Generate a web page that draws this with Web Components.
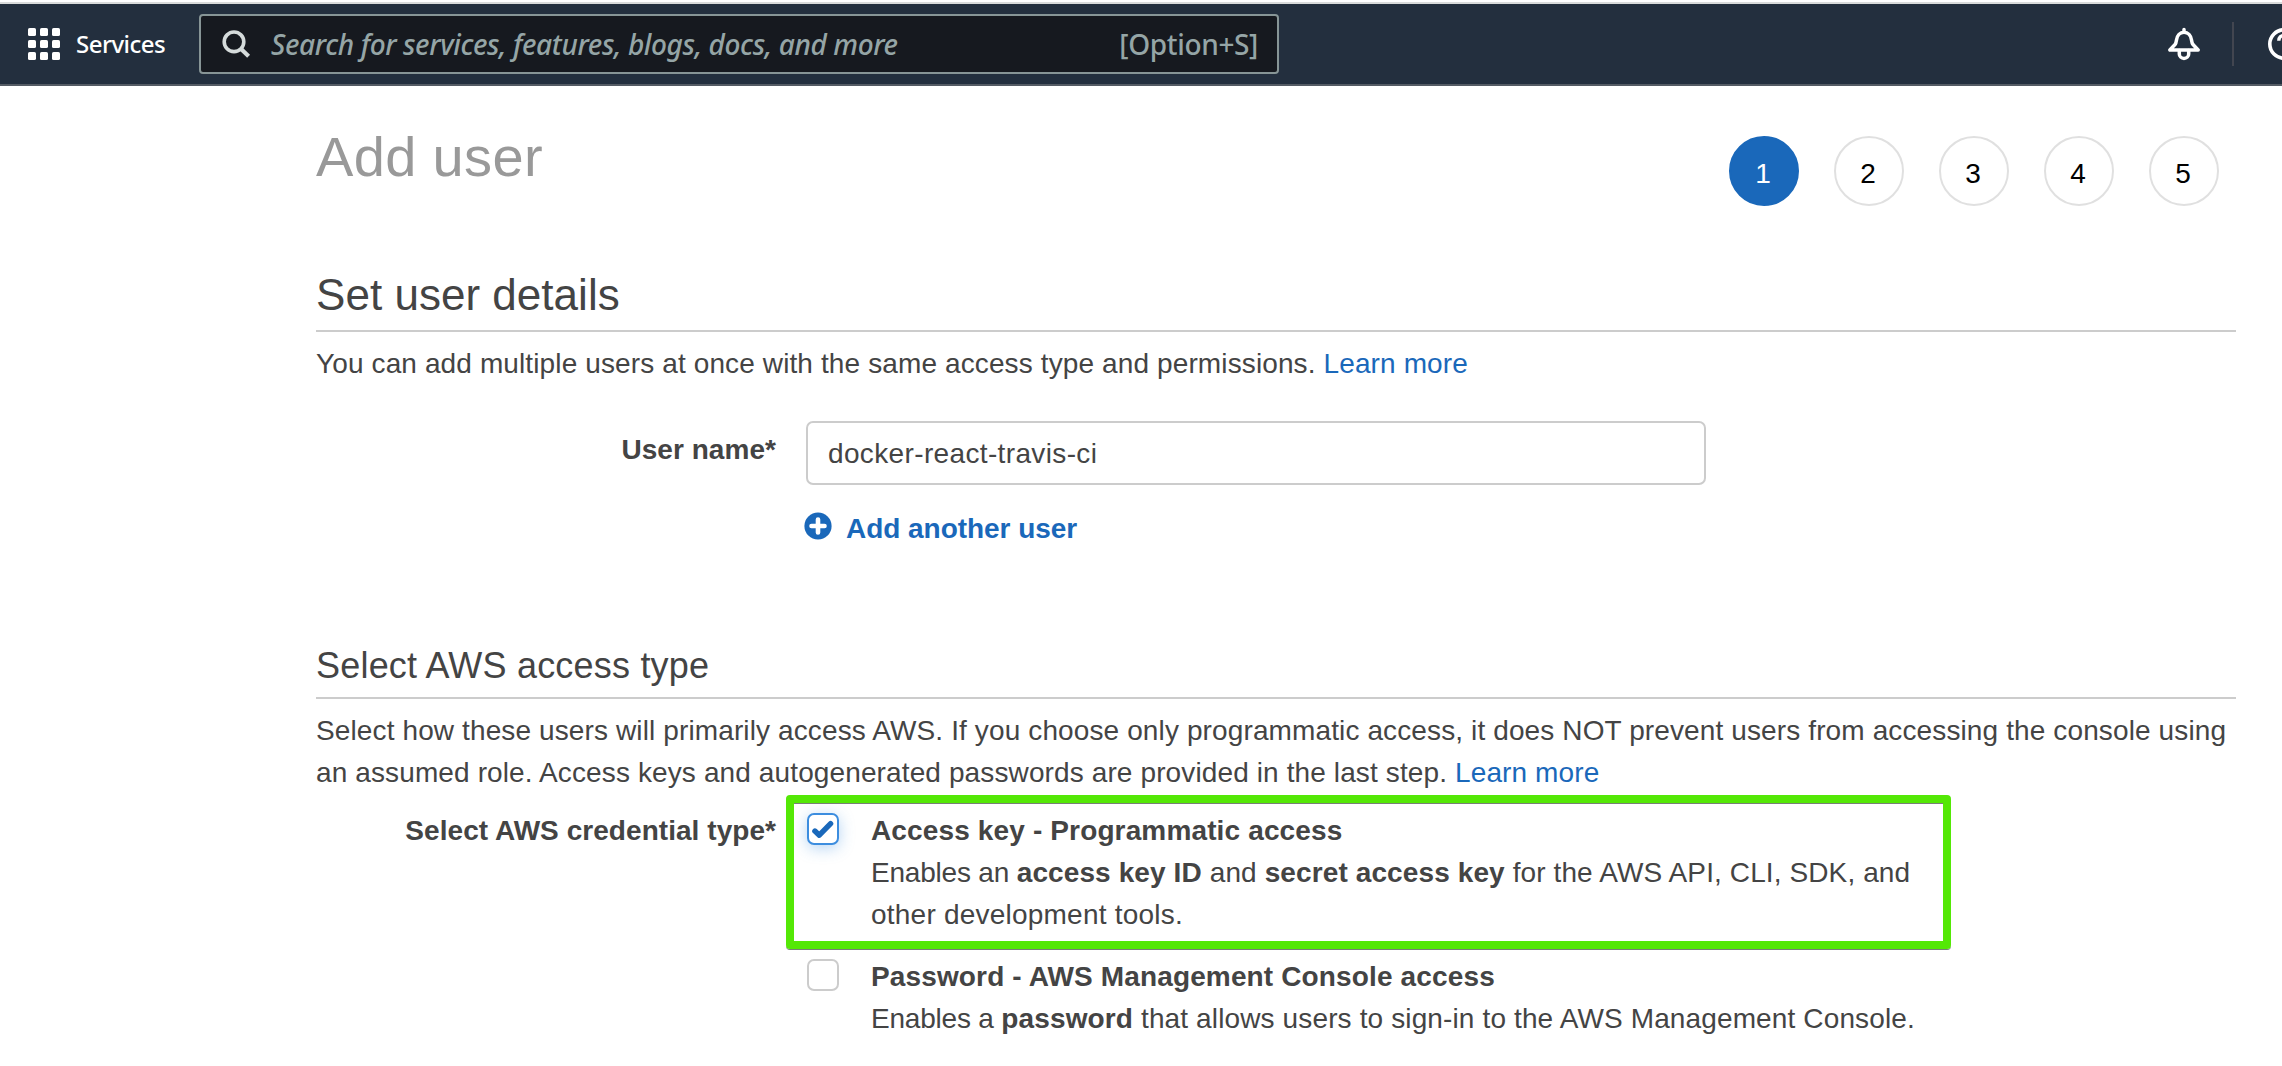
<!DOCTYPE html>
<html lang="en">
<head>
<meta charset="utf-8">
<title>Add user</title>
<style>
  html, body { margin: 0; height: 100%; overflow: hidden; background: #fff; }
  body { font-family: "Liberation Sans", Arial, sans-serif; font-size: 28px; line-height: 42px; letter-spacing: .12px; color: #444; }
</style>
</head>
<body>
<add-user-page></add-user-page>
<script>
const define = (name, html) => {
  const tpl = document.createElement('template');
  tpl.innerHTML = html;
  customElements.define(name, class extends HTMLElement {
    constructor() {
      super();
      this.attachShadow({ mode: 'open' }).append(tpl.content.cloneNode(true));
    }
  });
};

define('search-box', `
<style>
  :host { display: flex; align-items: center; box-sizing: border-box; width: 1080px; height: 60px; padding: 0 19px 0 20px;
    border: 2px solid #879596; border-radius: 4px; background: #16191f; color: #95a5a6; line-height: 40px; font-weight: 500; }
  svg { flex: none; width: 30px; height: 30px; margin-right: 20px; }
  .hint { flex: 1; font-style: italic; letter-spacing: -.38px; }
  .key { letter-spacing: -.35px; }
</style>
<svg viewBox="0 0 30 30" fill="none" stroke="#d5dbdb"><circle cx="13" cy="12.8" r="9.8" stroke-width="3.6"/><path d="M19.6 19.6 27.6 27.2" stroke-width="4.2"/></svg>
<span class="hint">Search for services, features, blogs, docs, and more</span>
<span class="key">[Option+S]</span>`);

define('top-nav', `
<style>
  :host { display: flex; align-items: flex-start; box-sizing: border-box; height: 84px; margin-top: 2px; background: #232f3e;
    border-top: 2px solid #d9dbdb; border-bottom: 2px solid #545b64; font-family: "Noto Sans", sans-serif; overflow: hidden; }
  .grid { flex: none; width: 32px; height: 32px; margin: 24px 16px 0 28px; }
  .services { width: 123px; margin-top: 20px; line-height: 40px; font-size: 24px; font-weight: 500; letter-spacing: -.55px; color: #fff; }
  search-box { flex: none; margin-top: 10px; }
  .bell { flex: none; width: 34px; height: 34px; margin: 23px 31px 0 auto; }
  .rule { flex: none; width: 2px; height: 44px; margin: 18px 33px 0 0; background: #424650; }
  .help { flex: none; width: 34px; height: 34px; margin: 23px -19px 0 0; }
</style>
<svg class="grid" viewBox="0 0 32 32" fill="#fff">
  <rect width="8" height="8" rx="1.6"/><rect x="12" width="8" height="8" rx="1.6"/><rect x="24" width="8" height="8" rx="1.6"/>
  <rect y="12" width="8" height="8" rx="1.6"/><rect x="12" y="12" width="8" height="8" rx="1.6"/><rect x="24" y="12" width="8" height="8" rx="1.6"/>
  <rect y="24" width="8" height="8" rx="1.6"/><rect x="12" y="24" width="8" height="8" rx="1.6"/><rect x="24" y="24" width="8" height="8" rx="1.6"/>
</svg>
<span class="services">Services</span>
<search-box></search-box>
<svg class="bell" viewBox="0 0 34 34" fill="none" stroke="#fff" stroke-width="3.5" stroke-linejoin="round" stroke-linecap="round">
  <path d="M17 2.6V5M2.8 22.9h28.4L26 17.6c-1-1.2-1.2-2.4-1.5-4.6C23.9 8.4 21 5.2 17 5.2S10.1 8.4 9.5 13c-.3 2.2-.5 3.4-1.5 4.6z"/><path d="M12.3 23.5v3.4a4.7 4.5 0 0 0 9.4 0v-3.4"/>
</svg>
<span class="rule"></span>
<svg class="help" viewBox="0 0 34 34" fill="none" stroke="#fff">
  <circle cx="17" cy="17" r="14.2" stroke-width="3.6"/><path d="M11.8 13.8c0-3.4 2.2-5.4 5.2-5.4s5.2 2 5.2 4.8c0 3-5.2 3.4-5.2 6.8M17 22.6v3.2" stroke-width="3.4"/>
</svg>`);

define('wizard-step', `
<style>
  :host { display: block; box-sizing: border-box; width: 70px; height: 70px; border: 2px solid #e0e0e0; border-radius: 50%;
    text-align: center; line-height: 71px; letter-spacing: 0; color: #000; }
  :host([active]) { background: #1a68ba; border-color: #1a68ba; color: #fff; }
  slot { display: block; margin-left: -2px; }
</style>
<slot></slot>`);

define('section-heading', `
<style>
  :host { display: block; border-bottom: 2px solid #ccc; box-sizing: border-box; }
  :host([level="2"]) { height: 67px; line-height: 60px; font-size: 44px; letter-spacing: .03px; }
  :host([level="3"]) { height: 57px; line-height: 48px; font-size: 36px; letter-spacing: .2px; }
</style>
<slot></slot>`);

define('text-link', `<style>:host { display: inline; color: #1a68ba; }</style><slot></slot>`);

define('form-row', `
<style>
  :host { display: grid; grid-template-columns: 460px 1fr; column-gap: 30px; }
  .label { text-align: right; font-weight: bold; letter-spacing: .05px; padding-top: var(--label-offset, 0); }
</style>
<div class="label"><slot name="label"></slot></div>
<div><slot></slot></div>`);

define('text-field', `
<style>
  :host { display: block; box-sizing: border-box; width: 900px; height: 64px; padding-left: 20px; line-height: 61px;
    border: 2px solid #ccc; border-radius: 7px; letter-spacing: .36px; }
</style>
<slot></slot>`);

define('add-link', `
<style>
  :host { display: flex; align-items: center; gap: 14px; margin-left: -2px; color: #1a68ba; font-weight: bold; letter-spacing: -.04px; }
  svg { width: 28px; height: 28px; margin-top: -6px; }
</style>
<svg viewBox="0 0 28 28"><circle cx="14" cy="14" r="13.6" fill="#1a68ba"/><path d="M14 7.5v13M7.5 14h13" stroke="#fff" stroke-width="4.6" stroke-linecap="round"/></svg>
<slot></slot>`);

define('check-option', `
<style>
  :host { display: grid; grid-template-columns: 32px 1060px; column-gap: 32px; margin-left: 1px; position: relative; }
  .box { box-sizing: border-box; width: 32px; height: 32px; margin-top: 3px; border: 2px solid #ccc; border-radius: 7px; background: #fff; }
  svg { display: none; width: 28px; height: 28px; }
  :host([checked]) .box { border-color: #3c8ddf; box-shadow: 0 3px 15px rgba(60, 141, 223, .38); }
  :host([checked]) svg { display: block; }
  .title { font-weight: bold; letter-spacing: .14px; }
  .mark { display: none; position: absolute; box-sizing: border-box; left: -21px; top: -15px; width: 1165px; height: 154px;
    border: 8px solid #54e806; border-radius: 4px; box-shadow: 0 1px 0 #777f77, inset 0 1px 0 #777f77; }
  :host([highlighted]) .mark { display: block; }
</style>
<div class="mark"></div>
<div class="box"><svg viewBox="0 0 28 28" fill="none" stroke="#1a68ba" stroke-width="5.4" stroke-linecap="round" stroke-linejoin="round"><path d="M5.9 16l4.4 4.2L21.6 8.6"/></svg></div>
<div><div class="title"><slot name="title"></slot></div><div><slot></slot></div></div>`);

define('add-user-page', `
<style>
  :host { display: flow-root; height: 1066px; }
  main { width: 1920px; margin-left: 316px; }
  header { display: flex; justify-content: space-between; height: 179px; }
  h1 { margin: 41px 0 0; font-size: 56px; line-height: 60px; font-weight: normal; letter-spacing: .35px; color: #999; }
  .steps { display: flex; gap: 35px; margin: 50px 17px 0 0; }
  .name { margin-top: 36px; height: 64px; --label-offset: 8px; }
  .add { margin-top: 23px; }
  .access { margin-top: 92px; }
  p { margin: 11px 0 0; }
  .type { margin-top: 16px; }
  .second { margin-top: 20px; letter-spacing: .13px; }
  .first { letter-spacing: .11px; }
  .lead { letter-spacing: -.2px; }
  .wide { letter-spacing: .22px; }
</style>
<top-nav></top-nav>
<main>
  <header>
    <h1>Add user</h1>
    <div class="steps"><wizard-step active>1</wizard-step><wizard-step>2</wizard-step><wizard-step>3</wizard-step><wizard-step>4</wizard-step><wizard-step>5</wizard-step></div>
  </header>
  <section-heading level="2">Set user details</section-heading>
  <p>You can add multiple users at once with the same access type and permissions. <text-link>Learn more</text-link></p>
  <form-row class="name"><span slot="label">User name*</span><text-field>docker-react-travis-ci</text-field></form-row>
  <form-row class="add"><add-link>Add another user</add-link></form-row>
  <section-heading class="access" level="3">Select AWS access type</section-heading>
  <p>Select how these users will primarily access AWS. If you choose only programmatic access, it does NOT prevent users from accessing the console using<br>an assumed role. Access keys and autogenerated passwords are provided in the last step. <text-link>Learn more</text-link></p>
  <form-row class="type"><span slot="label">Select AWS credential type*</span>
    <check-option class="first" checked highlighted><span slot="title">Access key - Programmatic access</span><span class="lead">Enables an </span><b>access key ID</b> and <b>secret access key</b> for the AWS API, CLI, SDK, and<br><span class="wide">other development tools.</span></check-option>
    <check-option class="second"><span slot="title">Password - AWS Management Console access</span><span class="lead">Enables a </span><b>password</b> that allows users to sign-in to the AWS Management Console.</check-option>
  </form-row>
</main>`);
</script>
</body>
</html>
